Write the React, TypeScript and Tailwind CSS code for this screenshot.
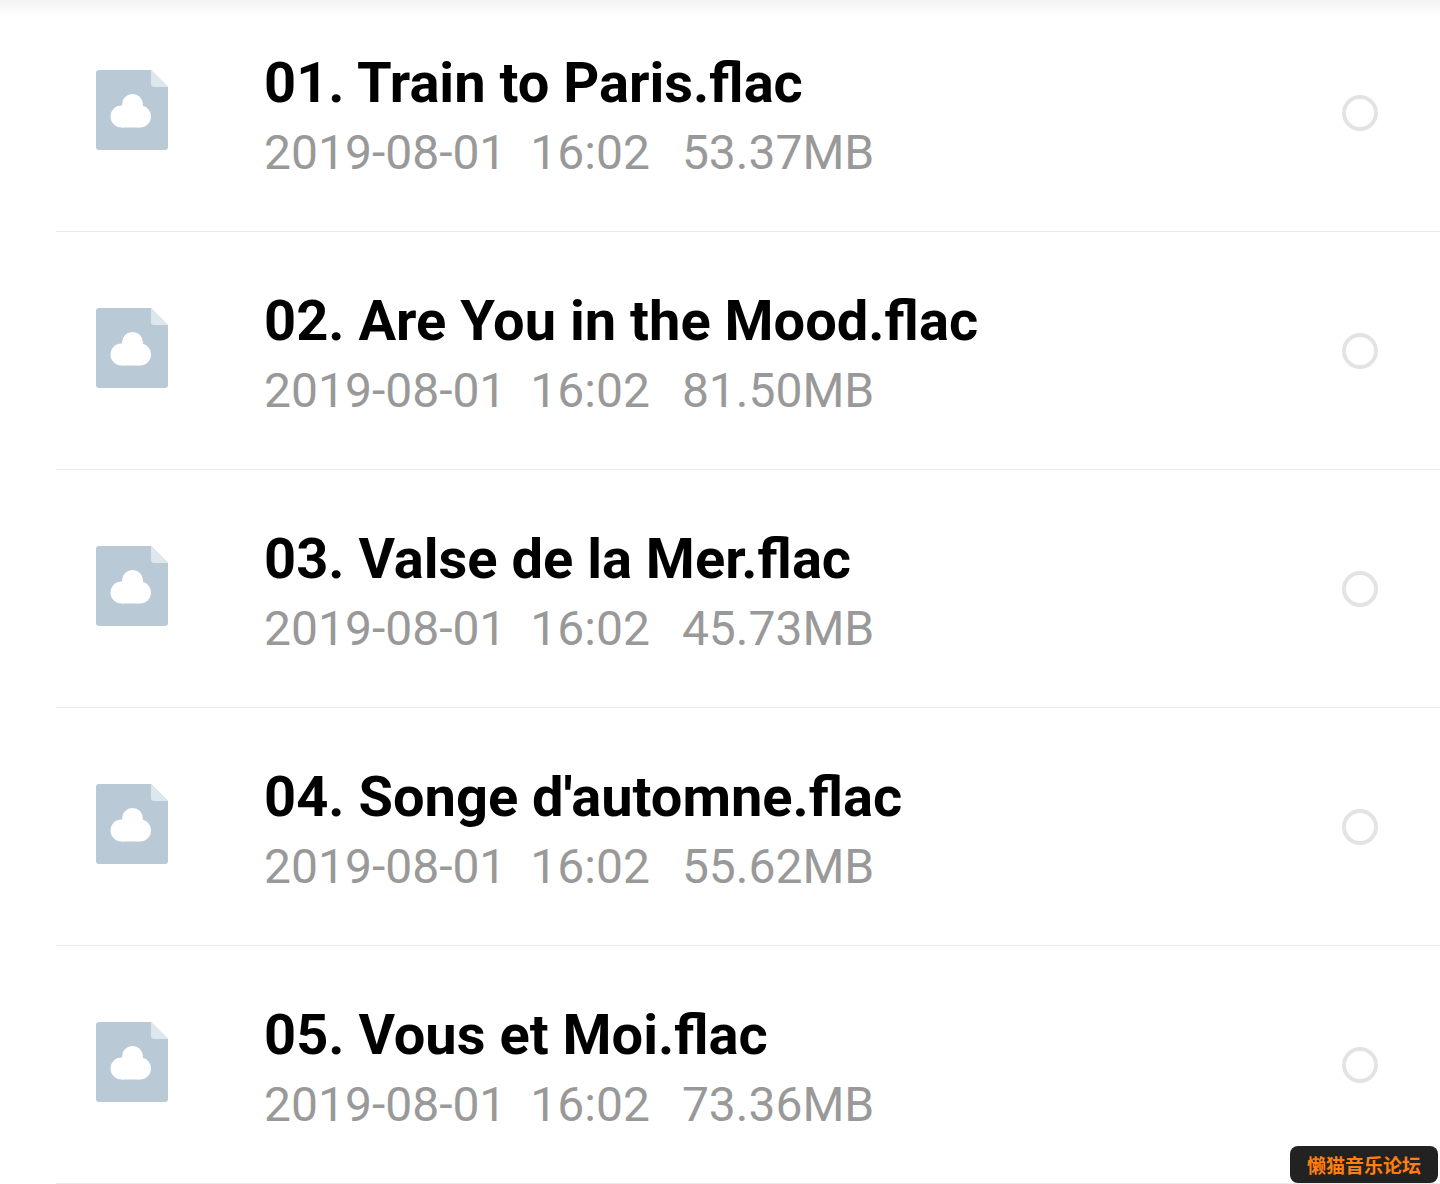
interface FileEntry {
  name: string;
  date: string;
  time: string;
  size: string;
}

const FILES: FileEntry[] = [
  { name: '01. Train to Paris.flac', date: '2019-08-01', time: '16:02', size: '53.37MB' },
  { name: '02. Are You in the Mood.flac', date: '2019-08-01', time: '16:02', size: '81.50MB' },
  { name: '03. Valse de la Mer.flac', date: '2019-08-01', time: '16:02', size: '45.73MB' },
  { name: "04. Songe d'automne.flac", date: '2019-08-01', time: '16:02', size: '55.62MB' },
  { name: '05. Vous et Moi.flac', date: '2019-08-01', time: '16:02', size: '73.36MB' },
];

function CloudFileIcon() {
  return (
    <svg className="h-20 w-18 shrink-0" viewBox="0 0 72 80" aria-hidden="true">
      <path d="M3 0H55L72 17V77a3 3 0 0 1-3 3H3a3 3 0 0 1-3-3V3a3 3 0 0 1 3-3Z" fill="#bac9d6" />
      <path d="M55 0L72 17H58a3 3 0 0 1-3-3Z" fill="#dde7ee" />
      <g fill="#fff">
        <circle cx="36.500" cy="34.500" r="10.500" />
        <circle cx="25.500" cy="46.500" r="11" />
        <circle cx="44" cy="46.500" r="11" />
        <path d="M25.500 36H44V57.500H25.500Z" />
      </g>
    </svg>
  );
}

function FileRow({ file }: { file: FileEntry }) {
  return (
    <li className="ml-14 flex items-start border-b border-[#ebebeb] pr-[62px] pl-10">
      <div className="pt-[76px]">
        <CloudFileIcon />
      </div>
      <label htmlFor={file.name} className="ml-24 flex-1 pt-14 pb-12">
        <span className="block text-[56px] leading-[66px] font-bold text-black">{file.name}</span>
        <span className="mt-[7px] flex gap-6 text-[48px] leading-[60px] text-[#999999]">
          <span>{file.date}</span>
          <span>{file.time}</span>
          <span className="ml-2">{file.size}</span>
        </span>
      </label>
      <input
        id={file.name}
        type="checkbox"
        className="mt-[101px] size-9 shrink-0 appearance-none rounded-full border-4 border-[#e3e3e3] checked:bg-[#bac9d6]"
      />
    </li>
  );
}

export default function App() {
  return (
    <main className="min-h-screen overflow-hidden bg-white font-['Roboto',sans-serif]">
      <div className="-mb-[22px] h-4 bg-linear-to-b from-[#f3f3f3] to-white" />
      <ul>
        {FILES.map((file) => (
          <FileRow key={file.name} file={file} />
        ))}
      </ul>
      <div className="fixed right-0.5 bottom-px rounded-lg bg-[#222222] px-[17px] py-2 font-['Noto_Sans_CJK_SC',sans-serif] text-[19px] leading-[21px] font-bold text-[#ff7f0e]">
        懒猫音乐论坛
      </div>
    </main>
  );
}
